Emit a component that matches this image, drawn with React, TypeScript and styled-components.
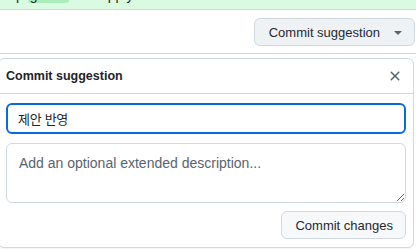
import React from "react"
import styled, { createGlobalStyle } from "styled-components"

const GlobalStyle = createGlobalStyle`
  * {
    box-sizing: border-box;
  }
  body {
    margin: 0;
    background: #ffffff;
    color: #1f2328;
    font-family: "Liberation Sans", "Noto Sans CJK KR", Arial, sans-serif;
    overflow: hidden;
  }
`

const Page = styled.div`
  display: flex;
  flex-direction: column;
  width: 416px;
  height: 249px;
  overflow: hidden;
`

const Banner = styled.div`
  height: 10px;
  background: #dafbe1;
  border-bottom: 1px solid #d1d9e0;
  overflow: hidden;
`

const BannerLine = styled.div`
  margin-top: -13px;
  padding-left: 6px;
  font-size: 14px;
  line-height: 16px;
  color: #1f2328;
  white-space: nowrap;
`

const Mark = styled.span`
  background: #aceebb;
  border-radius: 3px;
  padding: 0 2px;
`

const Toolbar = styled.div`
  display: flex;
  justify-content: flex-end;
  align-items: flex-start;
  height: 44px;
  padding: 8px 1px 0 0;
  border-bottom: 1px solid #d1d9e0;
`

const Button = styled.button<{ $tone?: "muted" | "plain" }>`
  display: inline-flex;
  align-items: center;
  gap: 10px;
  height: 28px;
  border: 1px solid #d1d9e0;
  border-radius: 6px;
  background: ${p => (p.$tone === "muted" ? "#eff2f5" : "#f6f8fa")};
  color: #25292e;
  font-family: inherit;
  font-size: 13px;
  font-weight: 500;
  padding: ${p => (p.$tone === "muted" ? "0 8px 0 14px" : "0 12px 0 13px")};
  cursor: pointer;
`

const Caret = styled.svg`
  width: 16px;
  height: 16px;
  fill: #59636e;
`

const Panel = styled.div`
  margin: 4px 0 0 -2px;
  width: 416px;
  border: 1px solid #d1d9e0;
  border-radius: 6px;
  background: #ffffff;
  box-shadow: 0 1px 0 rgba(31, 35, 40, 0.04);
`

const PanelHeader = styled.div`
  display: flex;
  align-items: center;
  justify-content: space-between;
  height: 35px;
  padding: 0 8px 0 7px;
  border-bottom: 1px solid #d1d9e0;
`

const Title = styled.h3`
  margin: 0;
  font-size: 12.5px;
  font-weight: 700;
  color: #1f2328;
`

const CloseButton = styled.button`
  display: flex;
  align-items: center;
  justify-content: center;
  width: 20px;
  height: 20px;
  padding: 0;
  border: 0;
  background: transparent;
  color: #59636e;
  cursor: pointer;
`

const PanelBody = styled.div`
  display: flex;
  flex-direction: column;
  gap: 8px;
  padding: 9px 7px 8px 7px;
`

const TitleInput = styled.input`
  width: 100%;
  height: 31px;
  padding: 0 10px;
  border: 2px solid #0969da;
  border-radius: 6px;
  outline: none;
  font-family: "Liberation Sans", "Noto Sans CJK KR", sans-serif;
  font-size: 13px;
  letter-spacing: -0.3px;
  color: #1f2328;
  margin-bottom: 1px;
`

const DescriptionArea = styled.textarea`
  width: 100%;
  height: 60px;
  padding: 9px 12px;
  border: 1px solid #d1d9e0;
  border-radius: 6px;
  outline: none;
  resize: vertical;
  font-family: "Liberation Sans", sans-serif;
  font-size: 14px;
  line-height: 20px;
  color: #1f2328;

  &::placeholder {
    color: #59636e;
  }
`

const Actions = styled.div`
  display: flex;
  justify-content: flex-end;
`

export default function App() {
  return (
    <Page>
      <GlobalStyle />
      <Banner>
        <BannerLine>
          Up <Mark>git diff</Mark> and apply
        </BannerLine>
      </Banner>
      <Toolbar>
        <Button $tone="muted">
          Commit suggestion
          <Caret viewBox="0 0 16 16">
            <path d="m4.427 7.427 3.396 3.396a.25.25 0 0 0 .354 0l3.396-3.396A.25.25 0 0 0 11.396 7H4.604a.25.25 0 0 0-.177.427Z" />
          </Caret>
        </Button>
      </Toolbar>
      <Panel>
        <PanelHeader>
          <Title>Commit suggestion</Title>
          <CloseButton aria-label="Close">
            <svg width="16" height="16" viewBox="0 0 16 16" fill="currentColor">
              <path d="M3.72 3.72a.75.75 0 0 1 1.06 0L8 6.94l3.22-3.22a.749.749 0 0 1 1.275.326.749.749 0 0 1-.215.734L9.06 8l3.22 3.22a.749.749 0 0 1-.326 1.275.749.749 0 0 1-.734-.215L8 9.06l-3.22 3.22a.751.751 0 0 1-1.042-.018.751.751 0 0 1-.018-1.042L6.94 8 3.72 4.78a.75.75 0 0 1 0-1.06Z" />
            </svg>
          </CloseButton>
        </PanelHeader>
        <PanelBody>
          <TitleInput defaultValue="제안 반영" autoFocus />
          <DescriptionArea placeholder="Add an optional extended description..." />
          <Actions>
            <Button>Commit changes</Button>
          </Actions>
        </PanelBody>
      </Panel>
    </Page>
  )
}
